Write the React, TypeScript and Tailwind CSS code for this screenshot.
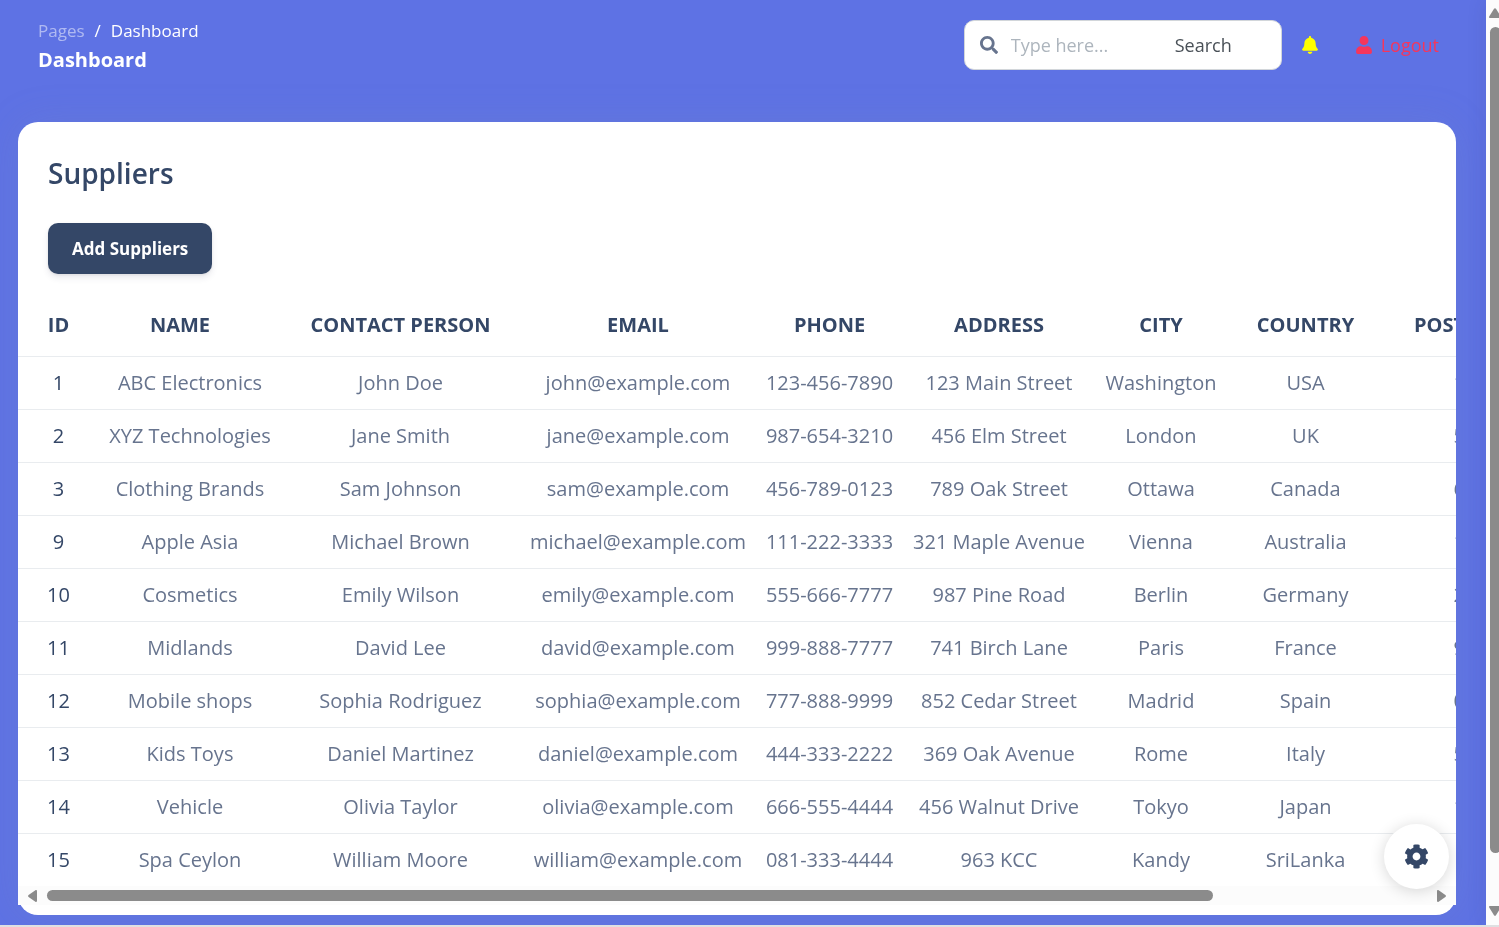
import { FaBell, FaCog, FaSearch, FaUser } from "react-icons/fa";

type Supplier = {
  id: number;
  name: string;
  contact: string;
  email: string;
  phone: string;
  address: string;
  city: string;
  country: string;
  postal: string;
};

const suppliers: Supplier[] = [
  { id: 1, name: "ABC Electronics", contact: "John Doe", email: "john@example.com", phone: "123-456-7890", address: "123 Main Street", city: "Washington", country: "USA", postal: "12345" },
  { id: 2, name: "XYZ Technologies", contact: "Jane Smith", email: "jane@example.com", phone: "987-654-3210", address: "456 Elm Street", city: "London", country: "UK", postal: "54321" },
  { id: 3, name: "Clothing Brands", contact: "Sam Johnson", email: "sam@example.com", phone: "456-789-0123", address: "789 Oak Street", city: "Ottawa", country: "Canada", postal: "67890" },
  { id: 9, name: "Apple Asia", contact: "Michael Brown", email: "michael@example.com", phone: "111-222-3333", address: "321 Maple Avenue", city: "Vienna", country: "Australia", postal: "13579" },
  { id: 10, name: "Cosmetics", contact: "Emily Wilson", email: "emily@example.com", phone: "555-666-7777", address: "987 Pine Road", city: "Berlin", country: "Germany", postal: "24680" },
  { id: 11, name: "Midlands", contact: "David Lee", email: "david@example.com", phone: "999-888-7777", address: "741 Birch Lane", city: "Paris", country: "France", postal: "97531" },
  { id: 12, name: "Mobile shops", contact: "Sophia Rodriguez", email: "sophia@example.com", phone: "777-888-9999", address: "852 Cedar Street", city: "Madrid", country: "Spain", postal: "02468" },
  { id: 13, name: "Kids Toys", contact: "Daniel Martinez", email: "daniel@example.com", phone: "444-333-2222", address: "369 Oak Avenue", city: "Rome", country: "Italy", postal: "53197" },
  { id: 14, name: "Vehicle", contact: "Olivia Taylor", email: "olivia@example.com", phone: "666-555-4444", address: "456 Walnut Drive", city: "Tokyo", country: "Japan", postal: "12398" },
  { id: 15, name: "Spa Ceylon", contact: "William Moore", email: "william@example.com", phone: "081-333-4444", address: "963 KCC", city: "Kandy", country: "SriLanka", postal: "8000" },
];

const headings = ["ID", "Name", "Contact Person", "Email", "Phone", "Address", "City", "Country", "Postal Code", "Action"];

function TopBar() {
  return (
    <header className="flex items-start justify-between pt-5 pr-[47px] pl-[38px]">
      <div className="text-white">
        <nav aria-label="Breadcrumb" className="flex gap-[10px] text-[17px] leading-[22px]">
          <a href="#pages" className="opacity-50">Pages</a>
          <span>/</span>
          <span>Dashboard</span>
        </nav>
        <h6 className="mt-1 text-[20px] leading-7 font-bold">Dashboard</h6>
      </div>
      <div className="flex items-center">
        <form className="flex h-[50px] w-[318px] items-center rounded-[10px] border border-[#d2d6da] bg-white pl-[15px]" onSubmit={(e) => e.preventDefault()}>
          <FaSearch className="size-[18px] shrink-0 text-[#67748e]" />
          <input
            type="text"
            aria-label="Search"
            placeholder="Type here..."
            className="ml-[13px] w-[164px] text-[18px] text-[#495057] outline-none placeholder:text-[#adb5bd]"
          />
          <button type="submit" className="text-[18px] text-[#495057]">Search</button>
        </form>
        <button type="button" aria-label="Notifications" className="ml-[19px] text-[#ffff00]">
          <FaBell className="size-[18px]" />
        </button>
        <a href="#logout" className="ml-9 flex items-center gap-2 text-[18px] text-[#f5365c]">
          <FaUser className="size-[18px]" />
          Logout
        </a>
      </div>
    </header>
  );
}

function SupplierTable() {
  return (
    <div className="overflow-x-auto bg-white [scrollbar-width:none]">
      <table className="w-[1708px] border-collapse text-center text-[20px] leading-[30px] whitespace-nowrap">
        <colgroup>
          <col className="w-[81px]" />
          <col className="w-[182px]" />
          <col className="w-[239px]" />
          <col className="w-[236px]" />
          <col className="w-[147px]" />
          <col className="w-[192px]" />
          <col className="w-[132px]" />
          <col className="w-[157px]" />
          <col className="w-[196px]" />
          <col />
        </colgroup>
        <thead>
          <tr className="h-[62px] border-b border-[#e9ecef] text-[#344767]">
            {headings.map((h) => (
              <th key={h} scope="col" className={h === "Name" ? "pr-5 font-bold uppercase" : "font-bold uppercase"}>{h}</th>
            ))}
          </tr>
        </thead>
        <tbody className="text-[#67748e]">
          {suppliers.map((s) => (
            <tr key={s.id} className="h-[53px] border-b border-[#e9ecef] last:border-b-0">
              <td className="text-[#344767]">{s.id}</td>
              <td>{s.name}</td>
              <td>{s.contact}</td>
              <td>{s.email}</td>
              <td>{s.phone}</td>
              <td>{s.address}</td>
              <td>{s.city}</td>
              <td>{s.country}</td>
              <td>{s.postal}</td>
              <td>Edit</td>
            </tr>
          ))}
        </tbody>
      </table>
    </div>
  );
}

function HorizontalScrollbar() {
  return (
    <div aria-hidden="true" className="flex h-[19px] items-center gap-[10px] bg-[#fcfcfc] px-[10px] text-[#8b8b8b]">
      <svg viewBox="0 0 9 12" className="h-3 w-[9px] shrink-0 fill-current">
        <path d="M9 1.2v9.6c0 1-.8 1.500-1.600 1L.6 7C-.1 6.500-.1 5.500.6 5L7.400.2C8.200-.3 9 .2 9 1.200z" />
      </svg>
      <div className="flex-1">
        <div className="h-[11px] w-[84.500%] rounded-full bg-[#8b8b8b]" />
      </div>
      <svg viewBox="0 0 9 12" className="h-3 w-[9px] shrink-0 fill-current">
        <path d="M0 1.2v9.600c0 1 .8 1.500 1.600 1L8.400 7c.7-.5.7-1.500 0-2L1.600.2C.8-.3 0 .2 0 1.200z" />
      </svg>
    </div>
  );
}

function VerticalScrollbar() {
  return (
    <div aria-hidden="true" className="relative flex w-[13px] shrink-0 flex-col items-end bg-[#fcfcfc] pt-2 pb-[9px] pl-[3px] text-[#8b8b8b] shadow-[0_0_20px_rgba(50,50,93,0.12)]">
      <svg viewBox="0 0 12 10" className="-mr-[2px] h-[10px] w-3 shrink-0 fill-current">
        <path d="M1.200 10h9.600c1 0 1.500-.8 1-1.600L7 .8C6.500.1 5.500.1 5 .8L.2 8.400c-.5.8 0 1.600 1 1.600z" />
      </svg>
      <div className="mt-[9px] w-full flex-1">
        <div className="-mr-[2px] ml-px h-[94%] rounded-full bg-[#8b8b8b]" />
      </div>
      <svg viewBox="0 0 12 10" className="-mr-[2px] h-[10px] w-3 shrink-0 fill-current">
        <path d="M1.200 0h9.600c1 0 1.500.8 1 1.600L7 9.200c-.5.7-1.500.7-2 0L.2 1.600C-.3.800.2 0 1.200 0z" />
      </svg>
    </div>
  );
}

export default function App() {
  return (
    <div className="flex min-h-screen overflow-hidden border-b-2 border-[#dfe0e2] bg-[#5e72e4] font-['Open_Sans','Noto_Sans',sans-serif]">
      <div className="relative min-w-0 flex-1 overflow-hidden">
        <TopBar />
        <main className="px-[18px] pt-12 pb-[10px]">
          <section className="mr-3 rounded-[20px] bg-white pt-[30px] pb-[10px] shadow-[0_0_40px_0_rgba(136,152,170,0.15)]">
            <div className="px-[30px]">
              <h1 className="text-[28px] leading-[42px] font-semibold text-[#344767]">Suppliers</h1>
              <button
                type="button"
                className="mt-[29px] h-[51px] rounded-[10px] bg-[#344767] px-6 text-[17px] font-bold text-white shadow-[0_4px_6px_rgba(50,50,93,0.1),0_1px_3px_rgba(0,0,0,0.08)]"
              >
                Add Suppliers
              </button>
            </div>
            <div className="mt-5">
              <SupplierTable />
              <HorizontalScrollbar />
            </div>
          </section>
        </main>
        <button
          type="button"
          aria-label="Settings"
          className="absolute right-[37px] bottom-9 flex size-[65px] items-center justify-center rounded-full bg-white text-[#344767] shadow-[0_2px_15px_rgba(0,0,0,0.16)]"
        >
          <FaCog className="size-[25px]" />
        </button>
      </div>
      <VerticalScrollbar />
    </div>
  );
}
